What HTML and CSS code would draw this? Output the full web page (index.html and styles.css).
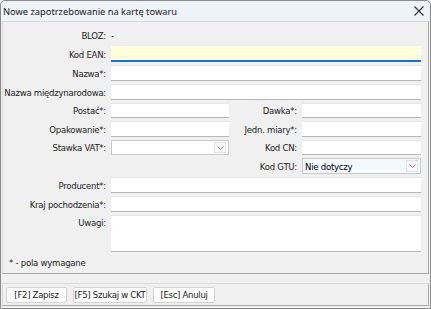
FILE: index.html
```html
<!DOCTYPE html>
<html lang="pl">
<head>
<meta charset="utf-8">
<link rel="stylesheet" href="styles.css">
</head>
<body>
<div class="window">
  <div class="titlebar">
    <span class="title">Nowe zapotrzebowanie na kartę towaru</span>
    <svg class="close" width="10" height="10" viewBox="0 0 10 10"><path d="M0.5 0.5L9.5 9.5M9.5 0.5L0.5 9.5" stroke="#333" stroke-width="1.1"/></svg>
  </div>
  <div class="panel">
    <div class="form">
      <div class="lbl r1">BLOZ:</div><div class="val r1">-</div>
      <div class="lbl r2">Kod EAN:</div><div class="inp full r2 ean"></div>
      <div class="lbl r3">Nazwa*:</div><div class="inp full r3"></div>
      <div class="lbl r4">Nazwa międzynarodowa:</div><div class="inp full r4"></div>
      <div class="lbl r5">Postać*:</div><div class="inp r5"></div><div class="lbl2 r5">Dawka*:</div><div class="inp c4 r5"></div>
      <div class="lbl r6">Opakowanie*:</div><div class="inp r6"></div><div class="lbl2 r6">Jedn. miary*:</div><div class="inp c4 r6"></div>
      <div class="lbl r7">Stawka VAT*:</div><div class="inp sel r7"><span class="arrow"><svg width="7" height="4" viewBox="0 0 7 4"><path d="M0.5 0.5L3.5 3.5L6.5 0.5" fill="none" stroke="#888" stroke-width="1"/></svg></span></div><div class="lbl2 r7">Kod CN:</div><div class="inp c4 r7"></div>
      <div class="lbl2 r8">Kod GTU:</div><div class="inp c4 sel gtu r8"><span class="seltext">Nie dotyczy</span><span class="arrow"><svg width="7" height="4" viewBox="0 0 7 4"><path d="M0.5 0.5L3.5 3.5L6.5 0.5" fill="none" stroke="#888" stroke-width="1"/></svg></span></div>
      <div class="lbl r9">Producent*:</div><div class="inp full r9"></div>
      <div class="lbl r10">Kraj pochodzenia*:</div><div class="inp full r10"></div>
      <div class="lbl top r11">Uwagi:</div><div class="inp full r11"></div>
    </div>
    <div class="note">* - pola wymagane</div>
  </div>
  <div class="footer">
    <button class="btn b1">[F2] Zapisz</button>
    <button class="btn b2">[F5] Szukaj w CKT</button>
    <button class="btn b3">[Esc] Anuluj</button>
  </div>
</div>
</body>
</html>
```
FILE: styles.css
```css
* { box-sizing: border-box; }
html, body { margin: 0; padding: 0; }
body {
  width: 431px; height: 309px; overflow: hidden;
  font-family: "DejaVu Sans Condensed", "DejaVu Sans", sans-serif;
  font-size: 9.5px;
  letter-spacing: -0.25px;
  color: #000;
  background: #f0f0f0;
}
.window {
  width: 431px; height: 309px;
  border: 1px solid #8a8a8a;
  border-radius: 5px 5px 0 0;
  background: #f0f0f0;
  display: flex; flex-direction: column;
}
.titlebar {
  height: 20px;
  flex: none;
  background: #eef2f9;
  display: flex; align-items: center; justify-content: space-between;
  padding: 0 5px 0 2px;
  border-radius: 5px 5px 0 0;
}
.title {
  font-family: "Noto Sans", "Open Sans", sans-serif;
  font-size: 9.3px;
  letter-spacing: 0;
  color: #1a1a1a;
}
.close { margin-right: 1px; }
.panel {
  flex: none;
  margin: 0 1px;
  height: 253px;
  border: 1px solid #dadada;
  border-right-color: #a9a9a9;
  border-bottom-color: #a9a9a9;
  padding: 5px 0 0 0;
  display: flex; flex-direction: column;
}
.form {
  display: grid;
  grid-template-columns: 102px 118px 63px 119px;
  grid-template-rows: 16px 16px 16px 16px 15px 16px 15px 16px 16px 16px 37px;
  column-gap: 5px;
  row-gap: 3px;
  margin-left: 1px;
}
.lbl {
  grid-column: 1;
  text-align: right;
  align-self: center;
  white-space: nowrap;
  color: #222;
}
.lbl.top { align-self: start; padding-top: 2px; }
.lbl2 {
  grid-column: 3;
  text-align: right;
  align-self: center;
  white-space: nowrap;
  color: #222;
  margin-left: -5px;
}
.val { grid-column: 2; align-self: center; }
.inp {
  grid-column: 2;
  background: #fff;
  border-top: 1px solid #e4e4e4;
  border-bottom: 1px solid #b8b8b8;
  position: relative;
}
.inp.full { grid-column: 2 / 5; }
.inp.c4 { grid-column: 4; }
.ean {
  background: #ffffd9;
  border-bottom: 2px solid #1a73c9;
  border-top-color: #fffff0;
}
.sel {
  border: 1px solid #c9c9c9;
  display: flex; align-items: center;
}
.gtu { background: #f2f9ff; }
.seltext { padding-left: 2px; }
.arrow {
  position: absolute; right: 2px; top: 1px; bottom: 1px;
  width: 12px;
  border: 1px solid #e2e2e2;
  background: #fafafa;
  display: flex; align-items: center; justify-content: center;
}
.r1 { grid-row: 1; } .r2 { grid-row: 2; } .r3 { grid-row: 3; } .r4 { grid-row: 4; }
.r5 { grid-row: 5; } .r6 { grid-row: 6; } .r7 { grid-row: 7; } .r8 { grid-row: 8; }
.r9 { grid-row: 9; } .r10 { grid-row: 10; } .r11 { grid-row: 11; }
.note {
  margin: 5px 0 0 6px;
  color: #222;
}
.footer {
  flex: none;
  margin: 9px 1px 0 1px;
  height: 23px;
  border: 1px solid #dadada;
  border-right-color: #a9a9a9;
  border-bottom-color: #a9a9a9;
  display: flex; align-items: center; gap: 6px;
  padding-left: 3px;
}
.btn {
  height: 16px;
  padding: 0;
  font: inherit;
  letter-spacing: -0.3px;
  white-space: nowrap;
  color: #222;
  background: #fdfdfd;
  border: 1px solid #d2d2d2;
  border-radius: 2px;
  line-height: 14px;
  text-align: center;
}
.b1 { width: 61px; }
.b2 { width: 74px; }
.b3 { width: 62px; }
```
